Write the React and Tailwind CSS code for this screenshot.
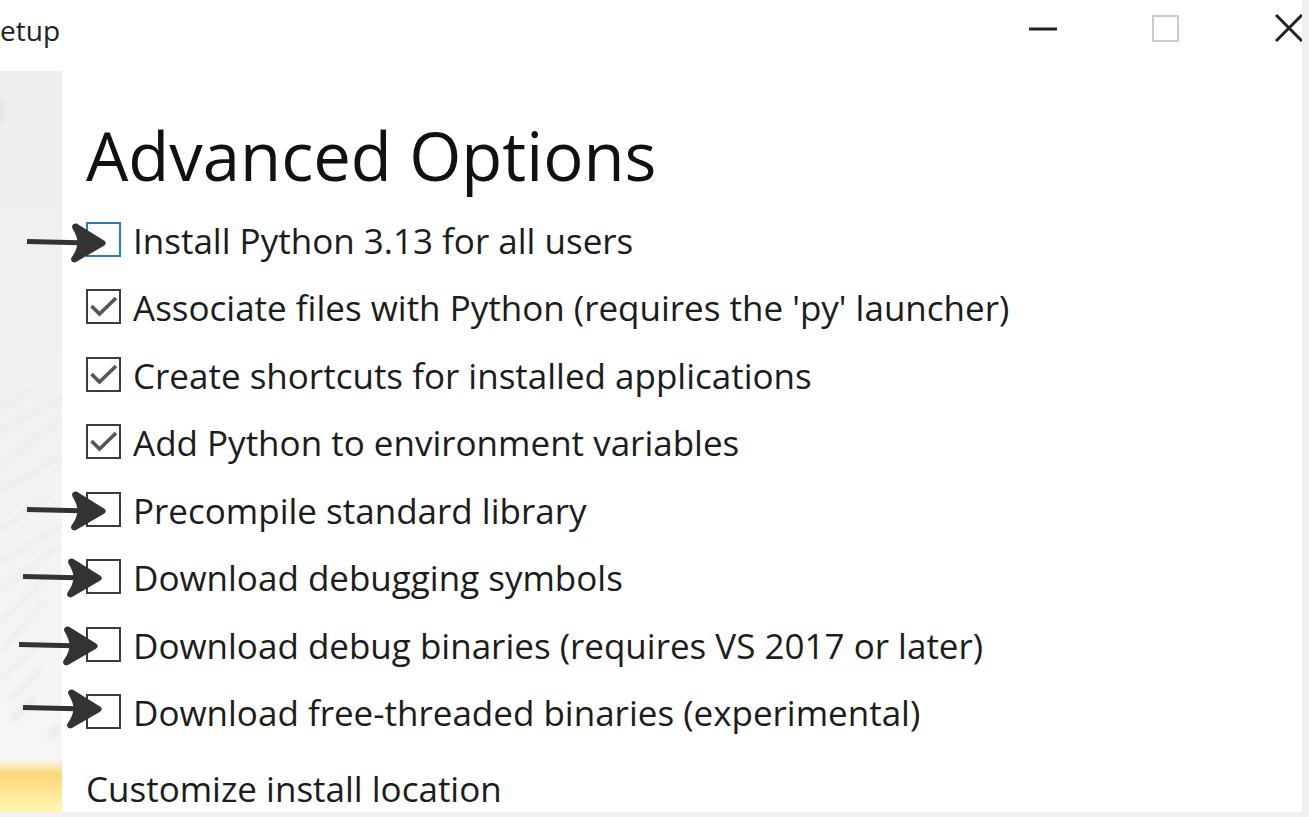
const options = [
  { id: "all-users", label: "Install Python 3.13 for all users", focus: true, arrow: "left-[26px] top-[15px]" },
  { id: "associate", label: "Associate files with Python (requires the 'py' launcher)", checked: true },
  { id: "shortcuts", label: "Create shortcuts for installed applications", checked: true },
  { id: "path", label: "Add Python to environment variables", checked: true },
  { id: "precompile", label: "Precompile standard library", arrow: "left-[26px] top-[13px]" },
  { id: "symbols", label: "Download debugging symbols", arrow: "left-[22px] top-[13px]" },
  { id: "debug", label: "Download debug binaries (requires VS 2017 or later)", arrow: "left-[18px] top-[13px]" },
  { id: "free-threaded", label: "Download free-threaded binaries (experimental)", arrow: "left-[22px] top-[9px]" },
];

function Arrow({ place }) {
  return (
    <svg className={`pointer-events-none absolute ${place} h-10 w-20`} viewBox="0 0 80 40" aria-hidden="true">
      <path d="M1 18.5L54 19.8" stroke="#333" strokeWidth="5" fill="none" />
      <path
        d="M51 .7C47.500 -.3 45 2.500 46.500 5.500C49.500 10.500 51.500 15 51.500 20C51 25 49 30 45.500 34.500C44 37.500 46.500 40.500 50 39L78 22.800C80.300 21 80.300 19 78 17.500Z"
        fill="#333"
      />
    </svg>
  );
}

function Option({ id, label, checked, focus, arrow }) {
  return (
    <li className="relative flex items-center pl-[86px]">
      <span className="relative size-[35px] shrink-0">
        <input
          id={id}
          type="checkbox"
          defaultChecked={checked}
          className={`peer block size-full appearance-none border-2 bg-white ${focus ? "border-[#2a7cb5]" : "border-[#3c3c3c]"}`}
        />
        <svg className="pointer-events-none absolute inset-0 hidden size-full peer-checked:block" viewBox="0 0 35 35" aria-hidden="true">
          <path d="M5.500 17L13.500 25L30 9" fill="none" stroke="#555" strokeWidth="3.600" />
        </svg>
      </span>
      <label htmlFor={id} className="pt-[3px] pl-3 text-[35px] leading-[60px] whitespace-nowrap">{label}</label>
      {arrow && <Arrow place={arrow} />}
    </li>
  );
}

function Artwork() {
  return (
    <div className="absolute top-[71px] bottom-0 left-0 flex w-[62px] flex-col overflow-hidden bg-linear-to-b from-[#eeeeee] via-[#f2f2f2] to-[#f7f7f8]" aria-hidden="true">
      <svg className="w-full flex-1" viewBox="0 0 62 690" preserveAspectRatio="none">
        <defs>
          <filter id="soften"><feGaussianBlur stdDeviation="2.500" /></filter>
        </defs>
        <g filter="url(#soften)" stroke="#e9e9e9" strokeWidth="3" fill="none">
          <path d="M0 28V52" stroke="#e6e6e6" strokeWidth="8" />
          <path d="M0 338L32 320M0 362L62 325M0 395L62 348M0 422L62 385M0 460L50 425M0 492L62 455M0 520L58 476M0 552L54 500M0 582L46 530M0 610L45 570M10 630L42 598" />
          <path d="M12 650L34 628M50 670L58 655" strokeWidth="6" />
        </g>
      </svg>
      <div className="h-[52px] shrink-0 bg-linear-to-b from-[#f8f6ee] via-[#fdd778] via-25% to-[#fff6b0]" />
    </div>
  );
}

export default function App() {
  return (
    <div className="min-h-screen overflow-hidden bg-[#f0f0f0] pr-[7px] pb-[5px] font-['Open_Sans','Noto_Sans',sans-serif] text-[#1c1c1c]">
      <div className="relative flex flex-col overflow-hidden bg-white">
        <header className="flex h-[71px] items-start justify-between">
          <span className="pt-[9px] text-[28px] leading-[42px] text-[#222]">etup</span>
          <div className="flex">
            <button type="button" aria-label="Minimize" className="flex h-14 w-[122px] items-center justify-center">
              <svg className="size-[28px]" viewBox="0 0 28 28"><path d="M0 15H28" stroke="#222" strokeWidth="3" /></svg>
            </button>
            <button type="button" aria-label="Maximize" disabled className="flex h-14 w-[122px] items-center justify-center">
              <span className="size-[27px] border-2 border-[#cccccc]" />
            </button>
            <button type="button" aria-label="Close" className="-mr-[50px] flex h-14 w-[126px] items-center justify-center">
              <svg className="size-[28px]" viewBox="0 0 28 28"><path d="M1 1L27 27M27 1L1 27" stroke="#222" strokeWidth="3" /></svg>
            </button>
          </div>
        </header>
        <Artwork />
        <main className="relative flex flex-col">
          <h1 className="pt-[38px] pl-[86px] text-[67px] leading-[92px] text-[#111]">Advanced Options</h1>
          <ul className="flex min-h-[542px] flex-col justify-between pt-[7px]">
            {options.map((o) => <Option key={o.id} {...o} />)}
          </ul>
          <p className="pt-[23px] pl-[86px] text-[35px] leading-[46px] whitespace-nowrap">Customize install location</p>
        </main>
      </div>
    </div>
  );
}
